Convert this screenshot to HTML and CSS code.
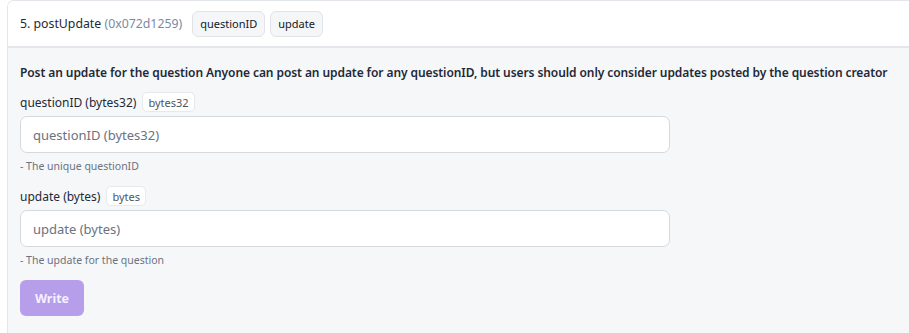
FILE: index.html
```html
<!DOCTYPE html>
<html>
<head>
<meta charset="utf-8">
<link rel="stylesheet" href="styles.css">
</head>
<body>
<div class="card">
  <div class="card-header">
    <span class="fn-name">5. postUpdate <span class="selector">(0x072d1259)</span></span>
    <span class="chip">questionID</span>
    <span class="chip">update</span>
  </div>
  <div class="card-body">
    <p class="desc">Post an update for the question Anyone can post an update for any questionID, but users should only consider updates posted by the question creator</p>
    <div class="field">
      <div class="label-row"><span class="label">questionID (bytes32)</span><span class="type-tag">bytes32</span></div>
      <input class="input" type="text" placeholder="questionID (bytes32)">
      <div class="hint">- The unique questionID</div>
    </div>
    <div class="field">
      <div class="label-row"><span class="label">update (bytes)</span><span class="type-tag">bytes</span></div>
      <input class="input" type="text" placeholder="update (bytes)">
      <div class="hint">- The update for the question</div>
    </div>
    <button class="write-btn" disabled>Write</button>
  </div>
</div>
</body>
</html>
```
FILE: styles.css
```css
html, body {
  margin: 0;
  padding: 0;
  background: #ffffff;
  overflow: hidden;
}
body {
  padding-left: 7px;
  font-family: "Noto Sans", "Open Sans", sans-serif;
  color: #1f2937;
}
.card {
  width: 940px;
  border-top: 1px solid #e3e6ea;
  border-left: 1px solid #e3e6ea;
  border-top-left-radius: 7px;
  overflow: hidden;
}
.card-header {
  height: 47px;
  box-sizing: border-box;
  display: flex;
  align-items: center;
  gap: 5px;
  padding: 0 12px;
  background: #ffffff;
  border-bottom: 2px solid #e3e6ea;
}
.fn-name {
  font-size: 12.3px;
  color: #1f2937;
  margin-right: 5px;
}
.selector {
  color: #7b8aa0;
}
.chip {
  font-size: 11px;
  color: #111827;
  background: #f5f6f8;
  border: 1px solid #e0e3e8;
  border-radius: 6px;
  height: 26px;
  box-sizing: border-box;
  padding: 0 7px;
  display: inline-flex;
  align-items: center;
}
.card-body {
  background: #f6f7f9;
  padding: 16px 12px 18px;
}
.desc {
  margin: 0 0 11px;
  font-size: 12px;
  letter-spacing: -0.08px;
  font-weight: 600;
  color: #1f2937;
  white-space: nowrap;
}
.field {
  margin-bottom: 13px;
}
.label-row {
  display: flex;
  align-items: center;
  gap: 6px;
  margin-bottom: 4px;
}
.label {
  font-size: 12px;
  color: #1f2937;
}
.type-tag {
  font-size: 11px;
  color: #4b5563;
  background: #ffffff;
  border: 1px solid #e7e9ed;
  border-radius: 5px;
  height: 20px;
  box-sizing: border-box;
  padding: 0 5px;
  display: inline-flex;
  align-items: center;
}
.input {
  display: block;
  width: 650px;
  height: 37px;
  box-sizing: border-box;
  border: 1px solid #d5d8dd;
  border-radius: 7px;
  background: #ffffff;
  padding: 0 12px;
  font-family: inherit;
  font-size: 13px;
  color: #1f2937;
  outline: none;
}
.input::placeholder {
  color: #6b7280;
}
.hint {
  margin-top: 6px;
  font-size: 10.5px;
  color: #6b7280;
}
.write-btn {
  display: block;
  margin-top: 0;
  width: 64px;
  height: 36px;
  border: none;
  border-radius: 6px;
  background: #b69eea;
  color: #f5f0ff;
  font-family: inherit;
  font-size: 12.5px;
  font-weight: 700;
}
```
